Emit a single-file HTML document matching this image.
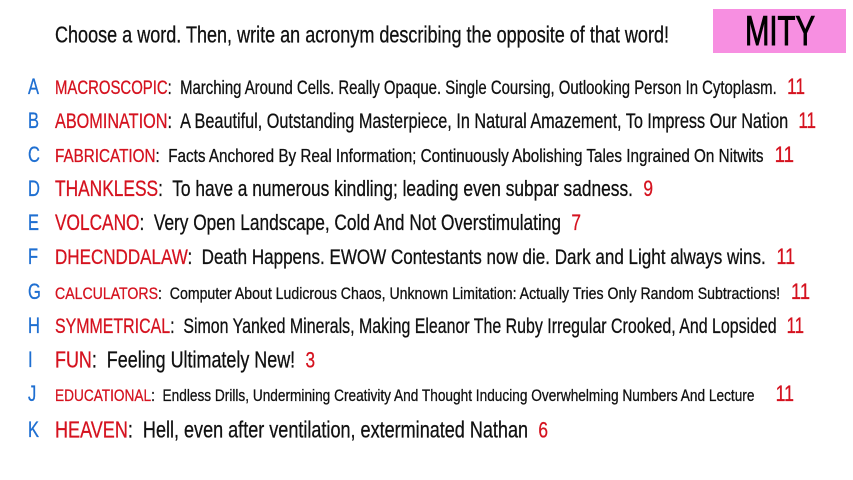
<!DOCTYPE html>
<html><head><meta charset="utf-8"><style>
body{margin:0;width:853px;height:480px;background:#fff;overflow:hidden;position:relative;font-family:"Liberation Sans Narrow","Liberation Sans",sans-serif;color:#111}
.l{position:absolute;white-space:nowrap;transform-origin:0 50%;line-height:1;-webkit-text-stroke:0.3px #111}
.k{position:absolute;left:28px;color:#1f6fd1;font-size:22px;line-height:1;transform:translateY(-50%) scaleX(.75);transform-origin:0 50%;-webkit-text-stroke:0.3px #1f6fd1}
.r{color:#d5121f;-webkit-text-stroke:0.3px #d5121f}
.n{color:#d5121f;margin-left:.6em;font-size:22px;-webkit-text-stroke:0.3px #d5121f}
#box{position:absolute;left:713px;top:9px;width:133px;height:44px;background:#f78fe1}
#mity{position:absolute;left:745px;top:31px;font-size:42px;color:#000;-webkit-text-stroke:1px #000}
</style></head><body>
<div id="box"></div>
<div class="l" id="mity" data-w="70">MITY</div>
<div class="l" style="left:55px;top:35px;font-size:23px" data-w="614">Choose a word. Then, write an acronym describing the opposite of that word!</div>

<div class="k" style="top:87px">A</div>
<div class="l" style="left:55px;top:87px;font-size:19px" data-w="750"><span class="r">MACROSCOPIC</span>:&nbsp; Marching Around Cells. Really Opaque. Single Coursing, Outlooking Person In Cytoplasm.<span class="n">11</span></div>
<div class="k" style="top:121px">B</div>
<div class="l" style="left:55px;top:121px;font-size:21px" data-w="761"><span class="r">ABOMINATION</span>:&nbsp; A Beautiful, Outstanding Masterpiece, In Natural Amazement, To Impress Our Nation<span class="n">11</span></div>
<div class="k" style="top:155px">C</div>
<div class="l" style="left:55px;top:155px;font-size:18px" data-w="739"><span class="r">FABRICATION</span>:&nbsp; Facts Anchored By Real Information; Continuously Abolishing Tales Ingrained On Nitwits<span class="n">11</span></div>
<div class="k" style="top:189px">D</div>
<div class="l" style="left:55px;top:189px;font-size:22px" data-w="598"><span class="r">THANKLESS</span>:&nbsp; To have a numerous kindling; leading even subpar sadness.<span class="n">9</span></div>
<div class="k" style="top:223px">E</div>
<div class="l" style="left:55px;top:223px;font-size:22px" data-w="526"><span class="r">VOLCANO</span>:&nbsp; Very Open Landscape, Cold And Not Overstimulating<span class="n">7</span></div>
<div class="k" style="top:257px">F</div>
<div class="l" style="left:55px;top:257px;font-size:21px" data-w="740"><span class="r">DHECNDDALAW</span>:&nbsp; Death Happens. EWOW Contestants now die. Dark and Light always wins.<span class="n">11</span></div>
<div class="k" style="top:292px">G</div>
<div class="l" style="left:55px;top:292px;font-size:17px" data-w="755"><span class="r">CALCULATORS</span>:&nbsp; Computer About Ludicrous Chaos, Unknown Limitation: Actually Tries Only Random Subtractions!<span class="n">11</span></div>
<div class="k" style="top:326px">H</div>
<div class="l" style="left:55px;top:326px;font-size:21px" data-w="749"><span class="r">SYMMETRICAL</span>:&nbsp; Simon Yanked Minerals, Making Eleanor The Ruby Irregular Crooked, And Lopsided<span class="n">11</span></div>
<div class="k" style="top:360px">I</div>
<div class="l" style="left:55px;top:360px;font-size:23px" data-w="260"><span class="r">FUN</span>:&nbsp; Feeling Ultimately New!<span class="n">3</span></div>
<div class="k" style="top:394px">J</div>
<div class="l" style="left:55px;top:394px;font-size:17px" data-w="739"><span class="r">EDUCATIONAL</span>:&nbsp; Endless Drills, Undermining Creativity And Thought Inducing Overwhelming Numbers And Lecture<span class="n" style="margin-left:1.2em">11</span></div>
<div class="k" style="top:430px">K</div>
<div class="l" style="left:55px;top:430px;font-size:23px" data-w="493"><span class="r">HEAVEN</span>:&nbsp; Hell, even after ventilation, exterminated Nathan<span class="n">6</span></div>
<script>
document.querySelectorAll('.l').forEach(function(e){var w=e.getBoundingClientRect().width;var t=+e.getAttribute('data-w');e.style.transform='translateY(-50%) scaleX('+(t/w)+')';});
</script>
</body></html>
